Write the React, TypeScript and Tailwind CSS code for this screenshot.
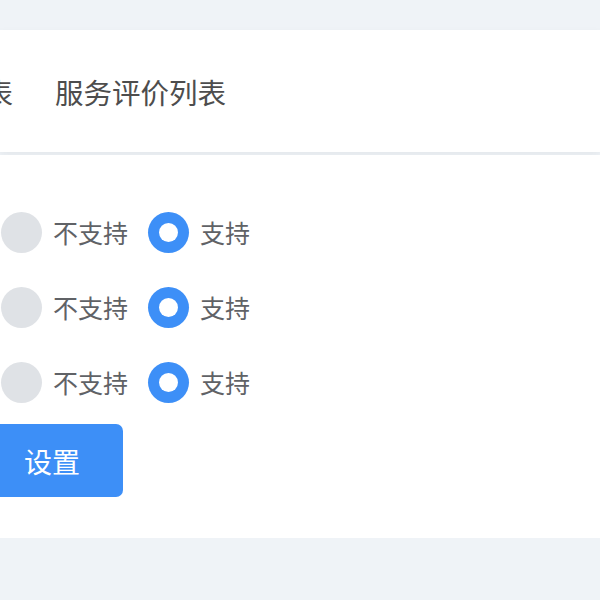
const rows = [0, 1, 2];

const Radio = ({ checked, label }: { checked: boolean; label: string }) => (
  <label className="flex items-center gap-[11px]">
    {checked ? (
      <span className="flex h-[41px] w-[41px] items-center justify-center rounded-full bg-[#3d8ff7]">
        <span className="h-[19px] w-[19px] rounded-full bg-white" />
      </span>
    ) : (
      <span className="h-[41px] w-[41px] rounded-full bg-[#dfe2e6]" />
    )}
    <span className="text-[25px] leading-none text-[#606266]">{label}</span>
  </label>
);

export default function App() {
  return (
    <div
      className="h-[600px] w-[600px] overflow-hidden bg-[#eff3f7] pt-[30px]"
      style={{ fontFamily: '"Noto Sans CJK SC", "Noto Sans", sans-serif' }}
    >
      {/* tabs */}
      <div className="flex h-[122px] items-center bg-white pt-[3px] shadow-[0_3px_8px_rgba(0,0,0,0.05)]">
        <span className="ml-[-101px] text-[28.5px] leading-none text-[#4d4d4d]">服务列表</span>
        <span className="ml-[42px] text-[28.5px] leading-none text-[#4d4d4d]">服务评价列表</span>
      </div>

      {/* settings */}
      <div className="mt-[3px] h-[383px] bg-white pt-[40px]">
        <div className="flex flex-col">
          {rows.map((r) => (
            <div key={r} className="flex h-[75px] items-center gap-[20px] pl-[1px]">
              <Radio checked={false} label="不支持" />
              <Radio checked label="支持" />
            </div>
          ))}
        </div>
        <button className="ml-[-19px] mt-[4px] flex h-[73px] w-[142px] items-center justify-center rounded-[7px] bg-[#3d8ff7] text-[28px] text-white">
          设置
        </button>
      </div>
    </div>
  );
}
